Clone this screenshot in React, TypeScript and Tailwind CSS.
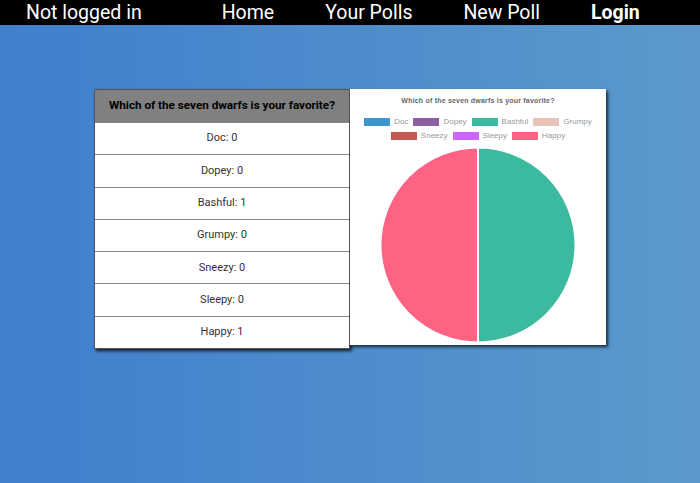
import React from "react";

const options = [
  { name: "Doc", votes: 0, color: "#3e95cd" },
  { name: "Dopey", votes: 0, color: "#8e5ea2" },
  { name: "Bashful", votes: 1, color: "#3cba9f" },
  { name: "Grumpy", votes: 0, color: "#e8c3b9" },
  { name: "Sneezy", votes: 0, color: "#c45850" },
  { name: "Sleepy", votes: 0, color: "#cc65fe" },
  { name: "Happy", votes: 1, color: "#ff6384" },
];

const question = "Which of the seven dwarfs is your favorite?";

function LegendItem({ name, color }: { name: string; color: string }) {
  return (
    <div className="flex items-center gap-[4px]">
      <span className="block w-[26px] h-[8px]" style={{ backgroundColor: color }} />
      <span>{name}</span>
    </div>
  );
}

function Pie() {
  const cx = 100;
  const cy = 100;
  const r = 97.5;
  return (
    <svg width="200" height="200" viewBox="0 0 200 200">
      <path d={`M${cx} ${cy} L${cx} ${cy - r} A${r} ${r} 0 0 1 ${cx} ${cy + r} Z`} fill="#3cba9f" stroke="#fff" strokeWidth="2" />
      <path d={`M${cx} ${cy} L${cx} ${cy + r} A${r} ${r} 0 0 1 ${cx} ${cy - r} Z`} fill="#ff6384" stroke="#fff" strokeWidth="2" />
    </svg>
  );
}

export default function App() {
  return (
    <div className="w-[700px] h-[483px] bg-gradient-to-r from-[#3f7fcc] to-[#5b99cc] font-['Roboto',sans-serif] overflow-hidden">
      {/* Navbar */}
      <header className="h-[25px] bg-black text-white flex items-center px-[26px] text-[19.5px] leading-none">
        <span>Not logged in</span>
        <nav className="flex items-center gap-[51px] ml-[80px]">
          <span>Home</span>
          <span>Your Polls</span>
          <span>New Poll</span>
          <span className="font-bold">Login</span>
        </nav>
      </header>

      <main className="flex justify-center mt-[64px]">
        {/* Vote table */}
        <div className="w-[256px] bg-white border border-[#555] shadow-[2px_2px_3px_rgba(0,0,0,0.8)] self-start">
          <div className="h-[32px] bg-[#808080] flex items-center justify-center text-[11.7px] font-bold text-black">
            {question}
          </div>
          {options.map((o) => (
            <div
              key={o.name}
              className="h-[32.3px] border-t border-[#888] flex items-center justify-center text-[11px] text-[#333]"
            >
              {o.name}: {o.votes}
            </div>
          ))}
        </div>

        {/* Chart */}
        <div className="w-[256px] h-[256px] bg-white shadow-[2px_2px_3px_rgba(0,0,0,0.7)] flex flex-col items-center pt-[7px] font-['Liberation_Sans',Arial,sans-serif]">
          <div className="text-[7px] font-bold text-[#666] tracking-[0.2px]">{question}</div>
          <div className="mt-[11px] flex flex-col items-center gap-[6px] text-[8px] text-[#999] leading-[8px]">
            <div className="flex gap-[5px]">
              {options.slice(0, 4).map((o) => (
                <LegendItem key={o.name} name={o.name} color={o.color} />
              ))}
            </div>
            <div className="flex gap-[5px]">
              {options.slice(4).map((o) => (
                <LegendItem key={o.name} name={o.name} color={o.color} />
              ))}
            </div>
          </div>
          <div className="mt-[5px]">
            <Pie />
          </div>
        </div>
      </main>
    </div>
  );
}
